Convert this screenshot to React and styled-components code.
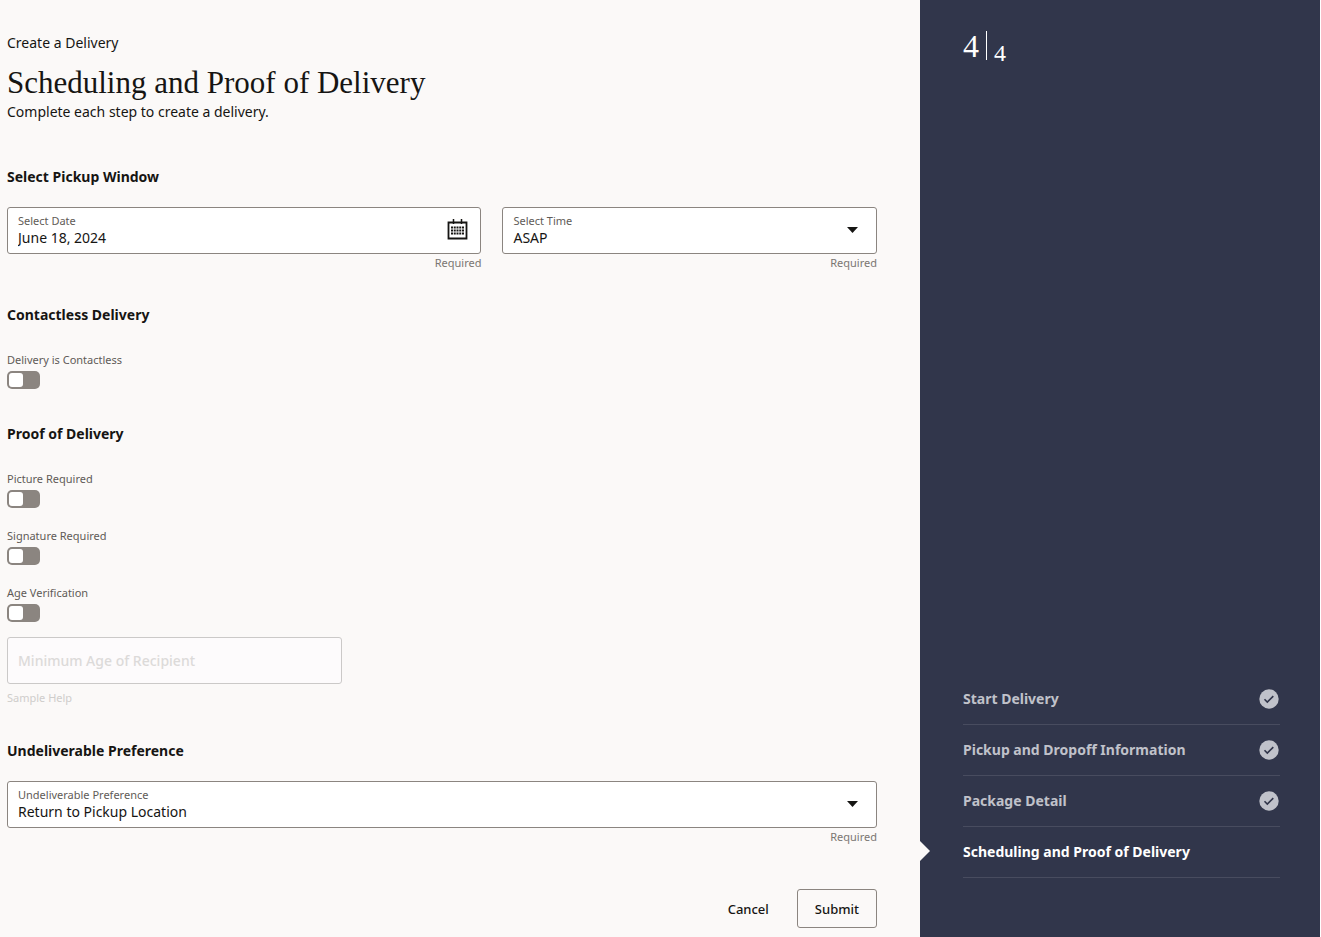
import React, { useState } from 'react';
import styled, { createGlobalStyle } from 'styled-components';

const GlobalStyle = createGlobalStyle`
  *, *::before, *::after {
    box-sizing: border-box;
  }

  body {
    margin: 0;
    background-color: #fbf9f8;
    color: #161513;
    font-family: 'Noto Sans', 'Open Sans', sans-serif;
    font-size: 14px;
    line-height: 20px;
  }

  button, input, select {
    font: inherit;
    color: inherit;
  }
`;

const Page = styled.div`
  display: flex;
  min-height: 100vh;
`;

const Main = styled.form`
  flex: 1;
  min-width: 0;
  padding: 33px 43px 9px 7px;
`;

const Text = styled.p`
  margin: 0;
`;

const Title = styled.h1`
  margin: 10px 0 0;
  font-family: Georgia, 'Liberation Serif', serif;
  font-size: 31px;
  font-weight: 400;
  line-height: 39px;
`;

const Section = styled.section`
  margin-top: ${(props) => props.$space || 35}px;
`;

const SectionTitle = styled.h2`
  margin: 0 0 ${(props) => props.$space || 20}px;
  font-size: 14px;
  font-weight: 700;
  line-height: 20px;
`;

const FieldRow = styled.div`
  display: grid;
  grid-template-columns: 19fr 15fr;
  gap: 21px;
`;

const FieldBox = styled.div`
  display: flex;
  align-items: center;
  height: 47px;
  padding: 0 10px 2px;
  border: 1px solid #8b8580;
  border-radius: 3px;
  background-color: #fff;
`;

const FieldBody = styled.div`
  display: flex;
  flex: 1;
  flex-direction: column;
  min-width: 0;
`;

const FieldLabel = styled.label`
  color: #5f5b57;
  font-size: 11px;
  line-height: 16px;
`;

const Input = styled.input`
  width: 100%;
  height: 18px;
  padding: 0;
  border: 0;
  outline: 0;
  background: transparent;
`;

const Select = styled.select`
  width: 100%;
  height: 18px;
  padding: 0;
  border: 0;
  outline: 0;
  appearance: none;
  background: transparent;
  line-height: 18px;
`;

const Arrow = styled.svg`
  width: 11px;
  height: 6px;
  margin-right: 8px;
  pointer-events: none;
`;

const IconButton = styled.button`
  display: flex;
  padding: 0;
  border: 0;
  margin-right: 2px;
  background: transparent;
  cursor: pointer;
`;

const Hint = styled.p`
  margin: 1px 0 0;
  color: #7a7672;
  font-size: 11px;
  line-height: 16px;
  text-align: right;
`;

const SwitchField = styled.div`
  display: flex;
  flex-direction: column;
  align-items: flex-start;
  gap: 3px;

  & + & {
    margin-top: 20px;
  }
`;

const SwitchInput = styled.input`
  appearance: none;
  width: 33px;
  height: 18px;
  margin: 0;
  padding: 2px;
  border-radius: 5px;
  background-color: #8b8580;
  cursor: pointer;

  &::before {
    content: '';
    display: block;
    width: 14px;
    height: 14px;
    border-radius: 3px;
    background-color: #fff;
  }

  &:checked::before {
    margin-left: 15px;
  }
`;

const AgeInput = styled.input`
  display: block;
  width: 335px;
  height: 47px;
  margin-top: 15px;
  padding: 0 10px;
  border: 1px solid #cbc9c8;
  border-radius: 3px;
  background-color: #fdfbfc;

  &::placeholder {
    color: #dcdad9;
    font-weight: 500;
    opacity: 1;
  }
`;

const Help = styled.p`
  margin: 6px 0 0;
  color: #cfcdcb;
  font-size: 11px;
  line-height: 16px;
`;

const Actions = styled.div`
  display: flex;
  justify-content: flex-end;
  gap: 10px;
  margin-top: 44px;
`;

const Button = styled.button`
  height: 39px;
  padding: 0 17px;
  border: 1px solid ${(props) => (props.$outlined ? '#8b8580' : 'transparent')};
  border-radius: 3px;
  background: transparent;
  font-size: 13px;
  font-weight: 500;
  cursor: pointer;
`;

const Sidebar = styled.aside`
  display: flex;
  flex-direction: column;
  justify-content: space-between;
  width: 401px;
  padding: 31px 40px 59px 43px;
  border-right: 1px solid #fff;
  background-color: #31364b;
  color: #fff;
`;

const Counter = styled.div`
  display: flex;
  height: 29px;
  font-family: Georgia, 'Liberation Serif', serif;
`;

const Current = styled.span`
  padding-right: 7px;
  border-right: 1px solid #fff;
  font-size: 32px;
  line-height: 31px;
`;

const Total = styled.span`
  padding-left: 7px;
  font-size: 24px;
  line-height: 44px;
`;

const Steps = styled.ol`
  margin: 0;
  padding: 0;
  list-style: none;
`;

const Step = styled.li`
  position: relative;
  display: flex;
  align-items: center;
  justify-content: space-between;
  height: 51px;
  padding-right: 1px;
  border-bottom: 1px solid #484c5f;
  color: ${(props) => (props.$active ? '#fff' : '#c0c2ca')};
  font-weight: 700;

  &::before {
    content: '';
    display: ${(props) => (props.$active ? 'block' : 'none')};
    position: absolute;
    top: 14px;
    left: -43px;
    border: 10px solid transparent;
    border-left-color: #fbf9f8;
    border-right-width: 0;
  }
`;

const CalendarIcon = () => (
  <svg width="21" height="21" viewBox="0 0 21 21" aria-hidden="true">
    <path d="M1.5 3.5h18v16h-18z" fill="none" stroke="#161513" strokeWidth="1.8" />
    <path d="M6.5 0v5M14.5 0v5" stroke="#161513" strokeWidth="1.5" />
    <path
      d="M4 8.5h13M4 11.5h13M4 14.5h13"
      stroke="#161513"
      strokeWidth="1.8"
      strokeDasharray="2 0.75"
    />
  </svg>
);

const CheckIcon = () => (
  <svg width="20" height="20" viewBox="0 0 20 20" aria-hidden="true">
    <circle cx="10" cy="10" r="9.7" fill="#c0c2ca" />
    <path d="M5.5 10.3l2.8 2.8 6-6" fill="none" stroke="#31364b" strokeWidth="1.6" />
  </svg>
);

const SelectField = ({ id, label, options }) => (
  <div>
    <FieldBox>
      <FieldBody>
        <FieldLabel htmlFor={id}>{label}</FieldLabel>
        <Select id={id} required>
          {options.map((option) => (
            <option key={option}>{option}</option>
          ))}
        </Select>
      </FieldBody>
      <Arrow viewBox="0 0 11 6" aria-hidden="true">
        <path d="M0 0h11L5.5 6z" fill="#161513" />
      </Arrow>
    </FieldBox>
    <Hint>Required</Hint>
  </div>
);

const Switch = ({ id, label, checked, onChange }) => (
  <SwitchField>
    <FieldLabel htmlFor={id}>{label}</FieldLabel>
    <SwitchInput
      type="checkbox"
      role="switch"
      id={id}
      checked={checked}
      onChange={(e) => onChange(id, e.target.checked)}
    />
  </SwitchField>
);

const steps = [
  'Start Delivery',
  'Pickup and Dropoff Information',
  'Package Detail',
  'Scheduling and Proof of Delivery',
];

const App = () => {
  const [date, setDate] = useState('June 18, 2024');
  const [switches, setSwitches] = useState({
    contactless: false,
    picture: false,
    signature: false,
    age: false,
  });

  const toggle = (id, value) => setSwitches({ ...switches, [id]: value });

  return (
    <>
      <GlobalStyle />
      <Page>
        <Main onSubmit={(e) => e.preventDefault()}>
          <Text>Create a Delivery</Text>
          <Title>Scheduling and Proof of Delivery</Title>
          <Text>Complete each step to create a delivery.</Text>

          <Section $space={45}>
            <SectionTitle>Select Pickup Window</SectionTitle>
            <FieldRow>
              <div>
                <FieldBox>
                  <FieldBody>
                    <FieldLabel htmlFor="date">Select Date</FieldLabel>
                    <Input
                      type="text"
                      id="date"
                      value={date}
                      onChange={(e) => setDate(e.target.value)}
                      required
                    />
                  </FieldBody>
                  <IconButton type="button" aria-label="Open calendar">
                    <CalendarIcon />
                  </IconButton>
                </FieldBox>
                <Hint>Required</Hint>
              </div>
              <SelectField id="time" label="Select Time" options={['ASAP']} />
            </FieldRow>
          </Section>

          <Section $space={34}>
            <SectionTitle $space={27}>Contactless Delivery</SectionTitle>
            <Switch
              id="contactless"
              label="Delivery is Contactless"
              checked={switches.contactless}
              onChange={toggle}
            />
          </Section>

          <Section>
            <SectionTitle $space={27}>Proof of Delivery</SectionTitle>
            <Switch id="picture" label="Picture Required" checked={switches.picture} onChange={toggle} />
            <Switch id="signature" label="Signature Required" checked={switches.signature} onChange={toggle} />
            <Switch id="age" label="Age Verification" checked={switches.age} onChange={toggle} />
            <AgeInput
              type="text"
              aria-label="Minimum Age of Recipient"
              placeholder="Minimum Age of Recipient"
              disabled={!switches.age}
            />
            <Help>Sample Help</Help>
          </Section>

          <Section>
            <SectionTitle>Undeliverable Preference</SectionTitle>
            <SelectField
              id="undeliverable"
              label="Undeliverable Preference"
              options={['Return to Pickup Location']}
            />
          </Section>

          <Actions>
            <Button type="button">Cancel</Button>
            <Button type="submit" $outlined>
              Submit
            </Button>
          </Actions>
        </Main>

        <Sidebar>
          <Counter>
            <Current>4</Current>
            <Total>4</Total>
          </Counter>
          <Steps>
            {steps.map((step, index) => {
              const active = index === steps.length - 1;
              return (
                <Step key={step} $active={active}>
                  {step}
                  {!active && <CheckIcon />}
                </Step>
              );
            })}
          </Steps>
        </Sidebar>
      </Page>
    </>
  );
};

export default App;
